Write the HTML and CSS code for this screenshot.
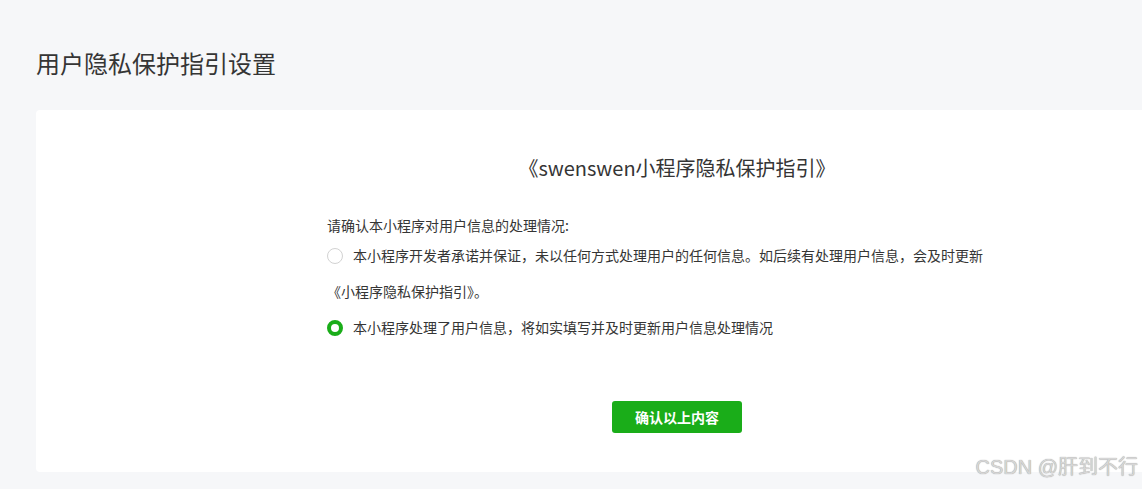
FILE: index.html
```html
<!DOCTYPE html>
<html lang="zh-CN">
<head>
  <meta charset="UTF-8">
  <title>用户隐私保护指引设置</title>
  <link rel="stylesheet" href="styles.css">
</head>
<body>
  <div class="page">
    <h1 class="page-title">用户隐私保护指引设置</h1>

    <div class="card">
      <div class="guide">
        <h2 class="guide-title">《swenswen小程序隐私保护指引》</h2>
        <p class="guide-tip">请确认本小程序对用户信息的处理情况:</p>

        <div class="options">
          <label class="option">
            <span class="radio"></span>本小程序开发者承诺并保证，未以任何方式处理用户的任何信息。如后续有处理用户信息，会及时更新《小程序隐私保护指引》。
          </label>
          <label class="option">
            <span class="radio checked"></span>本小程序处理了用户信息，将如实填写并及时更新用户信息处理情况
          </label>
        </div>

        <div class="actions">
          <button class="btn-primary">确认以上内容</button>
        </div>
      </div>
    </div>
  </div>

  <div class="watermark">CSDN @肝到不行</div>
</body>
</html>
```

FILE: styles.css
```css
* {
  box-sizing: border-box;
}

html, body {
  height: 100%;
}

body {
  margin: 0;
  background: #f6f7f9;
  font-family: "Noto Sans CJK SC", "Noto Sans", sans-serif;
  color: #353535;
}

.page {
  padding: 47px 0 0 36px;
}

.page-title {
  margin: 0 0 31px;
  font-size: 24px;
  line-height: 32px;
  font-weight: normal;
  color: #353535;
}

.card {
  background: #fff;
  border-radius: 4px 0 0 4px;
  padding: 44px 0 39px 291px;
}

.guide {
  width: 700px;
}

.guide-title {
  margin: 0;
  text-align: center;
  font-size: 20px;
  line-height: 28px;
  font-weight: normal;
  color: #353535;
}

.guide-tip {
  margin: 33px 0 0;
  font-size: 14px;
  line-height: 20px;
  color: #353535;
}

.options {
  margin-top: 2px;
}

.option {
  display: block;
  max-width: 664px;
  font-size: 14px;
  line-height: 36px;
  color: #353535;
  cursor: pointer;
}

.radio {
  display: inline-block;
  width: 16px;
  height: 16px;
  margin-right: 10px;
  border: 1px solid #d2d2d2;
  border-radius: 50%;
  vertical-align: -3px;
  background: #fff;
}

.radio.checked {
  border: 4px solid #1aad19;
}

.actions {
  margin-top: 56px;
  text-align: center;
}

.btn-primary {
  width: 130px;
  height: 32px;
  border: none;
  border-radius: 3px;
  background: #1aad19;
  color: #fff;
  font-family: inherit;
  font-size: 14px;
  font-weight: bold;
  cursor: pointer;
}

.watermark {
  position: absolute;
  right: 4px;
  bottom: 9px;
  font-family: "Liberation Sans", "Noto Sans CJK SC", sans-serif;
  font-size: 20px;
  font-weight: normal;
  color: #d6d6d6;
  text-shadow: 0 0 1px #8a8a8a;
}
```
